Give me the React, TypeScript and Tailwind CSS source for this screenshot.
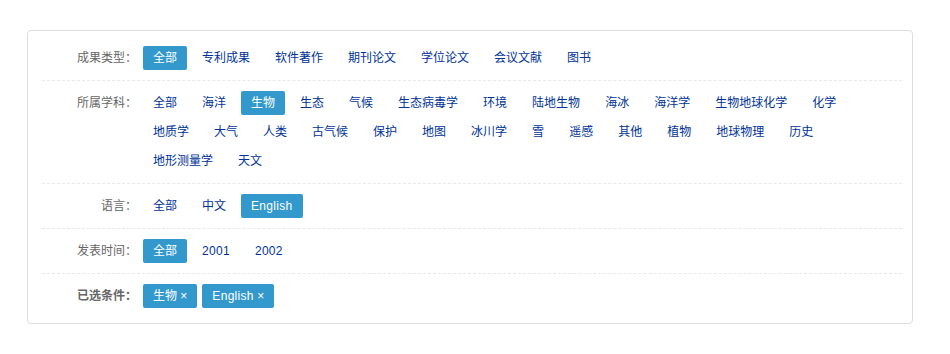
import React from "react";

const FONT = '"Liberation Sans", Arial, "Noto Sans CJK SC", sans-serif';

type Item = { label: string; active?: boolean; latin?: boolean };

function Chip({ item }: { item: Item }) {
  return (
    <a
      className={
        "inline-block h-6 px-[10px] leading-6 rounded-[2px] cursor-pointer whitespace-nowrap " +
        (item.active ? "bg-[#3399cc] text-white" : "text-[#003399]")
      }
    >
      <span className={item.latin ? "tracking-[0.3px]" : ""}>{item.label}</span>
    </a>
  );
}

function Row({
  label,
  items,
  last,
  bold,
  children,
}: {
  label: string;
  items?: Item[];
  last?: boolean;
  bold?: boolean;
  children?: React.ReactNode;
}) {
  return (
    <div
      className={
        "flex py-[10px] " + (last ? "" : "border-b border-dashed border-[#e8e8e8]")
      }
    >
      <div
        className={
          "w-[95px] shrink-0 text-right leading-6 text-[#666] " + (bold ? "font-bold text-[#555]" : "")
        }
      >
        {label}
      </div>
      <div className="ml-[6px] flex flex-wrap gap-[5px] flex-1 min-w-0">
        {items ? items.map((it, i) => <Chip key={i} item={it} />) : children}
      </div>
    </div>
  );
}

const types: Item[] = [
  { label: "全部", active: true },
  { label: "专利成果" },
  { label: "软件著作" },
  { label: "期刊论文" },
  { label: "学位论文" },
  { label: "会议文献" },
  { label: "图书" },
];

const subjects: Item[] = [
  "全部",
  "海洋",
  "生物",
  "生态",
  "气候",
  "生态病毒学",
  "环境",
  "陆地生物",
  "海冰",
  "海洋学",
  "生物地球化学",
  "化学",
  "地质学",
  "大气",
  "人类",
  "古气候",
  "保护",
  "地图",
  "冰川学",
  "雪",
  "遥感",
  "其他",
  "植物",
  "地球物理",
  "历史",
  "地形测量学",
  "天文",
].map((s) => ({ label: s, active: s === "生物" }));

const langs: Item[] = [
  { label: "全部" },
  { label: "中文" },
  { label: "English", active: true, latin: true },
];

const years: Item[] = [
  { label: "全部", active: true },
  { label: "2001", latin: true },
  { label: "2002", latin: true },
];

function Tag({ text, latin }: { text: string; latin?: boolean }) {
  return (
    <a className="inline-block h-6 px-[10px] leading-6 rounded-[2px] bg-[#3399cc] text-white whitespace-nowrap cursor-pointer">
      <span className={latin ? "tracking-[0.3px]" : ""}>{text}</span> ×
    </a>
  );
}

export default function App() {
  return (
    <div className="bg-white w-[950px] h-[354px] pt-[30px] pl-[27px] text-[12px]" style={{ fontFamily: FONT }}>
      <div className="w-[886px] border border-[#dddddd] rounded-[4px] pt-[5px] pb-[5px] pl-[14px] pr-[10px]">
        <Row label="成果类型：" items={types} />
        <Row label="所属学科：" items={subjects} />
        <Row label="语言：" items={langs} />
        <Row label="发表时间：" items={years} />
        <Row label="已选条件：" last bold>
          <Tag text="生物" />
          <Tag text="English" latin />
        </Row>
      </div>
    </div>
  );
}
